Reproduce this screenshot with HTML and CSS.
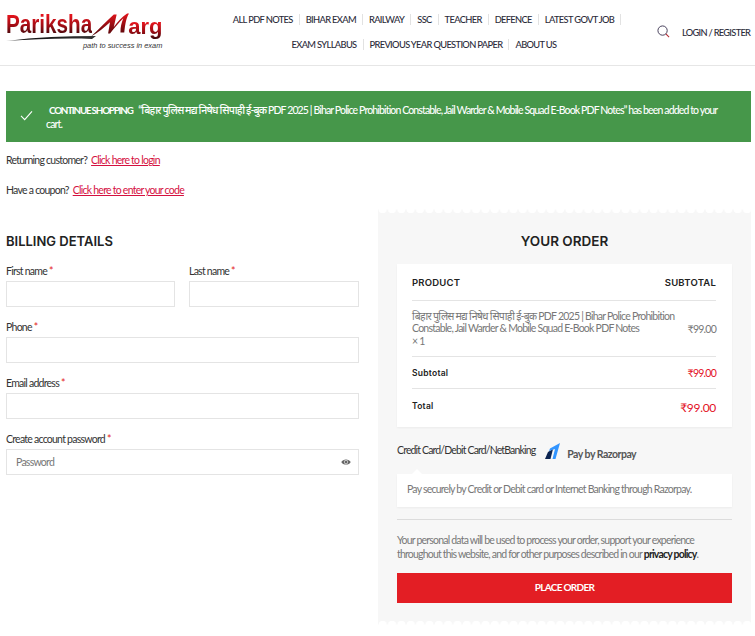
FILE: index.html
```html
<!DOCTYPE html>
<html lang="en">
<head>
<meta charset="utf-8">
<title>Checkout - Pariksha Marg</title>
<link rel="stylesheet" href="styles.css">
</head>
<body>
<header class="site-header">
  <a class="logo" href="#">
    <span class="logo-top"><span class="logo-word">Pariksha</span><svg class="logo-m" viewBox="0 0 40 26" width="38" height="26"><defs><linearGradient id="lg" x1="0" y1="0" x2="0" y2="1"><stop offset="0" stop-color="#e3141c"/><stop offset="1" stop-color="#4a0609"/></linearGradient></defs><path d="M0 25 C8 18 15 10 24 2 L27 2 L24 15 C28 10 32 5 38 1 L40 1 C37 6 36 12 35 21 L31 21 C31 15 32 11 34 6 C29 11 25 16 20 22 L18 22 L20 10 C14 15 8 21 0 25Z" fill="url(#lg)"/></svg><span class="logo-word logo-arg">arg</span></span>
    <svg class="logo-swoosh" viewBox="0 0 90 5" width="90" height="5"><defs><linearGradient id="ls" x1="0" y1="0" x2="1" y2="0"><stop offset="0" stop-color="#777"/><stop offset=".2" stop-color="#111"/><stop offset="1" stop-color="#333"/></linearGradient></defs><path d="M0 5 C30 1 60 0 90 0 L86 3 C60 2 30 3 0 5Z" fill="url(#ls)"/></svg>
    <span class="logo-tag">path to success in exam</span>
  </a>
  <nav class="main-nav">
    <a href="#">ALL PDF NOTES</a><a href="#">BIHAR EXAM</a><a href="#">RAILWAY</a><a href="#">SSC</a><a href="#">TEACHER</a><a href="#">DEFENCE</a><a href="#">LATEST GOVT JOB</a>
    <a href="#">EXAM SYLLABUS</a><a href="#">PREVIOUS YEAR QUESTION PAPER</a><a href="#" class="last">ABOUT US</a>
  </nav>
  <svg class="search-icon" viewBox="0 0 14 14" width="13" height="13"><circle cx="6" cy="6" r="5" fill="none" stroke="#3a3350" stroke-width="1"/><path d="M9.6 9.6 L13 13" stroke="#b3262e" stroke-width="1.1" fill="none"/></svg>
  <a class="login" href="#">LOGIN / REGISTER</a>
</header>

<main class="page">
  <div class="notice">
    <svg class="check" viewBox="0 0 14 12" width="13" height="11"><path d="M1 6.5 L5 10.5 L13 1.5" fill="none" stroke="#fff" stroke-width="1.2"/></svg>
    <p class="notice-text"><a class="continue" href="#">CONTINUE SHOPPING</a> “बिहार पुलिस मद्य निषेध सिपाही ई-बुक PDF 2025 | Bihar Police Prohibition Constable, Jail Warder &amp; Mobile Squad E-Book PDF Notes” has been added to your cart.</p>
  </div>

  <p class="toggle toggle-login">Returning customer? <a href="#">Click here to login</a></p>
  <p class="toggle toggle-coupon">Have a coupon? <a href="#">Click here to enter your code</a></p>

  <div class="checkout">
    <section class="billing">
      <h2 class="billing-title">BILLING DETAILS</h2>
      <div class="name-row">
        <div class="field"><label>First name <b>*</b></label><div class="input"></div></div>
        <div class="field"><label>Last name <b>*</b></label><div class="input"></div></div>
      </div>
      <div class="field"><label>Phone <b>*</b></label><div class="input"></div></div>
      <div class="field"><label>Email address <b>*</b></label><div class="input"></div></div>
      <div class="field"><label>Create account password <b>*</b></label>
        <div class="input input-pw"><span>Password</span>
          <svg viewBox="0 0 16 12" width="10" height="8"><path d="M0.5 6 C3 0.5 13 0.5 15.5 6 C13 11.5 3 11.5 0.5 6Z" fill="#666"/><circle cx="8" cy="6" r="3.4" fill="#ddd"/><circle cx="8" cy="6" r="2.2" fill="#666"/></svg>
        </div>
      </div>
    </section>

    <aside class="order">
      <h2 class="order-title">YOUR ORDER</h2>
      <div class="order-card">
        <div class="row row-head"><span>PRODUCT</span><span>SUBTOTAL</span></div>
        <div class="row row-item">
          <div class="item-name">बिहार पुलिस मद्य निषेध सिपाही ई-बुक PDF 2025 | Bihar Police Prohibition Constable, Jail Warder &amp; Mobile Squad E-Book PDF Notes<br>× 1</div>
          <div class="item-price">₹99.00</div>
        </div>
        <div class="row row-sub"><span class="strong">Subtotal</span><span class="red">₹99.00</span></div>
        <div class="row row-total"><span class="strong">Total</span><span class="red big">₹99.00</span></div>
      </div>
      <div class="pay-method">
        <span class="pay-label">Credit Card/Debit Card/NetBanking</span>
        <svg class="rzp" viewBox="0 0 15 16" width="15" height="16"><path d="M0 16 L3 9 L8 6 L5.5 16Z" fill="#0c2451"/><path d="M5 5.5 L15 0 L10.5 16 L7.5 16 L10 6 L4 8Z" fill="#3395ff"/></svg>
        <span class="pay-by">Pay by Razorpay</span>
      </div>
      <div class="pay-box">Pay securely by Credit or Debit card or Internet Banking through Razorpay.</div>
      <p class="privacy">Your personal data will be used to process your order, support your experience throughout this website, and for other purposes described in our <a href="#">privacy policy</a>.</p>
      <button class="place-order" type="button">PLACE ORDER</button>
    </aside>
  </div>
</main>
</body>
</html>
```
FILE: styles.css
```css
* { box-sizing: border-box; }
html, body { margin: 0; padding: 0; background: #fff; }
body {
  font-family: "Lato", "Noto Sans", "DejaVu Sans", sans-serif;
  font-size: 10.5px;
  letter-spacing: -0.75px;
  color: #333;
  overflow: hidden;
  height: 636px;
}
a { text-decoration: none; color: inherit; }
p { margin: 0; }

.site-header {
  height: 66px;
  border-bottom: 1px solid #e6e6e6;
  display: flex;
  align-items: center;
  padding: 0 5px 0 6px;
}
.logo { position: relative; display: block; width: 204px; height: 46px; flex: none; margin-top: 4px; letter-spacing: 0; }
.logo-top { display: flex; align-items: flex-end; height: 26px; }
.logo-word {
  display: inline-block;
  font-family: "Liberation Sans", Arial, sans-serif;
  font-weight: 700;
  font-size: 20.7px;
  line-height: 22px;
  letter-spacing: 0;
  transform: scaleY(1.2);
  transform-origin: 0 100%;
  background: linear-gradient(#e3141c 15%, #9c0c14 55%, #1d0608 100%);
  -webkit-background-clip: text;
  background-clip: text;
  color: transparent;
}
.logo-arg {
  font-size: 22px;
  line-height: 22px;
  padding-bottom: 6px;
  margin-bottom: -6px;
  transform: none;
  background: linear-gradient(#e3141c 25%, #9c0c14 55%, #1d0608 90%);
  -webkit-background-clip: text;
  background-clip: text;
}
.logo-m { margin: 0 -1px 0 -1px; flex: none; }
.logo-swoosh { display: block; margin-top: -2px; position: relative; }
.logo-tag {
  position: absolute;
  left: 77px;
  top: 29px;
  font-family: "Liberation Sans", Arial, sans-serif;
  font-style: italic;
  font-size: 7.4px;
  color: #333;
}
.main-nav {
  width: 436px;
  flex: none;
  display: flex;
  flex-wrap: wrap;
  justify-content: center;
  row-gap: 14px;
  margin-left: -4px;
  margin-top: -1px;
}
.main-nav a {
  font-size: 9.3px;
  letter-spacing: -0.65px;
  font-weight: 500;
  line-height: 11px;
  color: #2b2b3a;
  padding: 0 6px;
  border-right: 1px solid #e2e2e2;
}
.main-nav a.last { border-right: 0; }
.search-icon { margin-left: 15px; flex: none; margin-top: -3px; }
.login {
  margin-left: 12px;
  white-space: nowrap;
  font-size: 9.3px;
  letter-spacing: -0.72px;
  font-weight: 500;
  color: #2b2b3a;
}

.page { padding: 25px 4px 0 6px; }
.notice {
  background: #46974a;
  color: #fff;
  height: 51px;
  display: flex;
  align-items: flex-start;
  padding: 12px 24px 0 14px;
}
.check { flex: none; margin: 7px 13px 0 0; }
.notice-text { font-size: 10.5px; line-height: 14px; font-weight: 500; letter-spacing: -0.87px; }
.continue { font-weight: 700; font-size: 9.8px; letter-spacing: -1.2px; margin-left: 3px; margin-right: 4px; }

.toggle { line-height: 14px; color: #333; }
.toggle a { color: #d5103f; text-decoration: underline; margin-left: 2px; }
.toggle-login { margin-top: 11px; }
.toggle-coupon { margin-top: 16px; }

.checkout { display: grid; grid-template-columns: 353px 373px; column-gap: 19px; margin-top: 12px; }

.billing-title, .order-title {
  font-family: "Inter", "Open Sans", sans-serif;
  font-weight: 600;
  font-size: 13px;
  letter-spacing: 0;
  line-height: 18px;
  color: #222;
  margin: 0;
}
.billing-title { margin-top: 23px; margin-bottom: 11px; }
.name-row { display: grid; grid-template-columns: 169px 170px; column-gap: 14px; }
.field { margin-bottom: 10px; }
.field label { display: block; height: 20px; line-height: 20px; color: #333; }
.field label b { color: #e31e24; font-weight: 400; }
.input { height: 26px; border: 1px solid #e4e4e4; background: #fff; }
.input-pw {
  display: flex;
  align-items: center;
  justify-content: space-between;
  padding: 0 7px 0 9px;
  color: #777;
}

.order {
  position: relative;
  background: #f7f7f7;
  padding: 23px 19px 0;
  height: 416px;
}
.order::before, .order::after {
  content: "";
  position: absolute;
  left: 0;
  right: 0;
  height: 4px;
  background-size: 9.35px 4px;
  background-repeat: repeat-x;
}
.order::before { top: 0; background-image: radial-gradient(circle at 50% 0, #fff 4px, transparent 4.6px); }
.order::after { bottom: 0; background-image: radial-gradient(circle at 50% 100%, #fff 4px, transparent 4.6px); }
.order-title { text-align: center; font-size: 13.5px; margin-bottom: 14px; }
.order-card {
  background: #fff;
  box-shadow: 0 1px 2px rgba(0,0,0,.05);
  padding: 0 16px 0 15px;
  height: 163px;
}
.row { display: flex; justify-content: space-between; align-items: center; border-bottom: 1px solid #e4e4e4; }
.row:last-child { border-bottom: 0; }
.row-head {
  height: 37px;
  font-family: "Inter", "Open Sans", sans-serif;
  font-weight: 600;
  font-size: 9.5px;
  letter-spacing: 0.2px;
  color: #222;
}
.row-item { height: 56px; color: #777; }
.item-name { width: 270px; line-height: 12.3px; letter-spacing: -0.75px; }
.row-sub { height: 32px; }
.row-total { height: 38px; }
.strong { font-family: "Inter", "Open Sans", sans-serif; font-weight: 600; font-size: 8.5px; letter-spacing: 0.25px; color: #222; }
.row-total .strong { margin-top: -4px; }
.red { color: #e3101f; }
.big { font-size: 12px; letter-spacing: -0.3px; margin-top: -2px; }

.pay-method { display: flex; align-items: flex-start; margin-top: 16px; height: 31px; position: relative; }
.pay-label { line-height: 14px; color: #333; letter-spacing: -0.85px; }
.rzp { margin-left: 10px; flex: none; }
.pay-by { margin-left: 7px; margin-top: 4px; line-height: 14px; font-weight: 700; color: #555; letter-spacing: -0.5px; }
.pay-box {
  position: relative;
  background: #fff;
  height: 33px;
  line-height: 31px;
  padding-left: 10px;
  color: #777;
  letter-spacing: -0.78px;
  box-shadow: 0 1px 2px rgba(0,0,0,.05);
}
.pay-box::before {
  content: "";
  position: absolute;
  left: 15px;
  top: -5px;
  border-left: 5px solid transparent;
  border-right: 5px solid transparent;
  border-bottom: 5px solid #fff;
}
.privacy {
  margin-top: 12px;
  padding-top: 13px;
  border-top: 1px solid #dcdcdc;
  line-height: 14px;
  color: #777;
  letter-spacing: -0.8px;
}
.privacy a { color: #222; font-weight: 700; }
.place-order {
  display: block;
  width: 100%;
  height: 30px;
  margin-top: 12px;
  padding: 0 0 2px;
  border: 0;
  background: #e31e24;
  color: #fff;
  font-family: inherit;
  font-size: 10px;
  letter-spacing: -0.7px;
  font-weight: 700;
}
```
